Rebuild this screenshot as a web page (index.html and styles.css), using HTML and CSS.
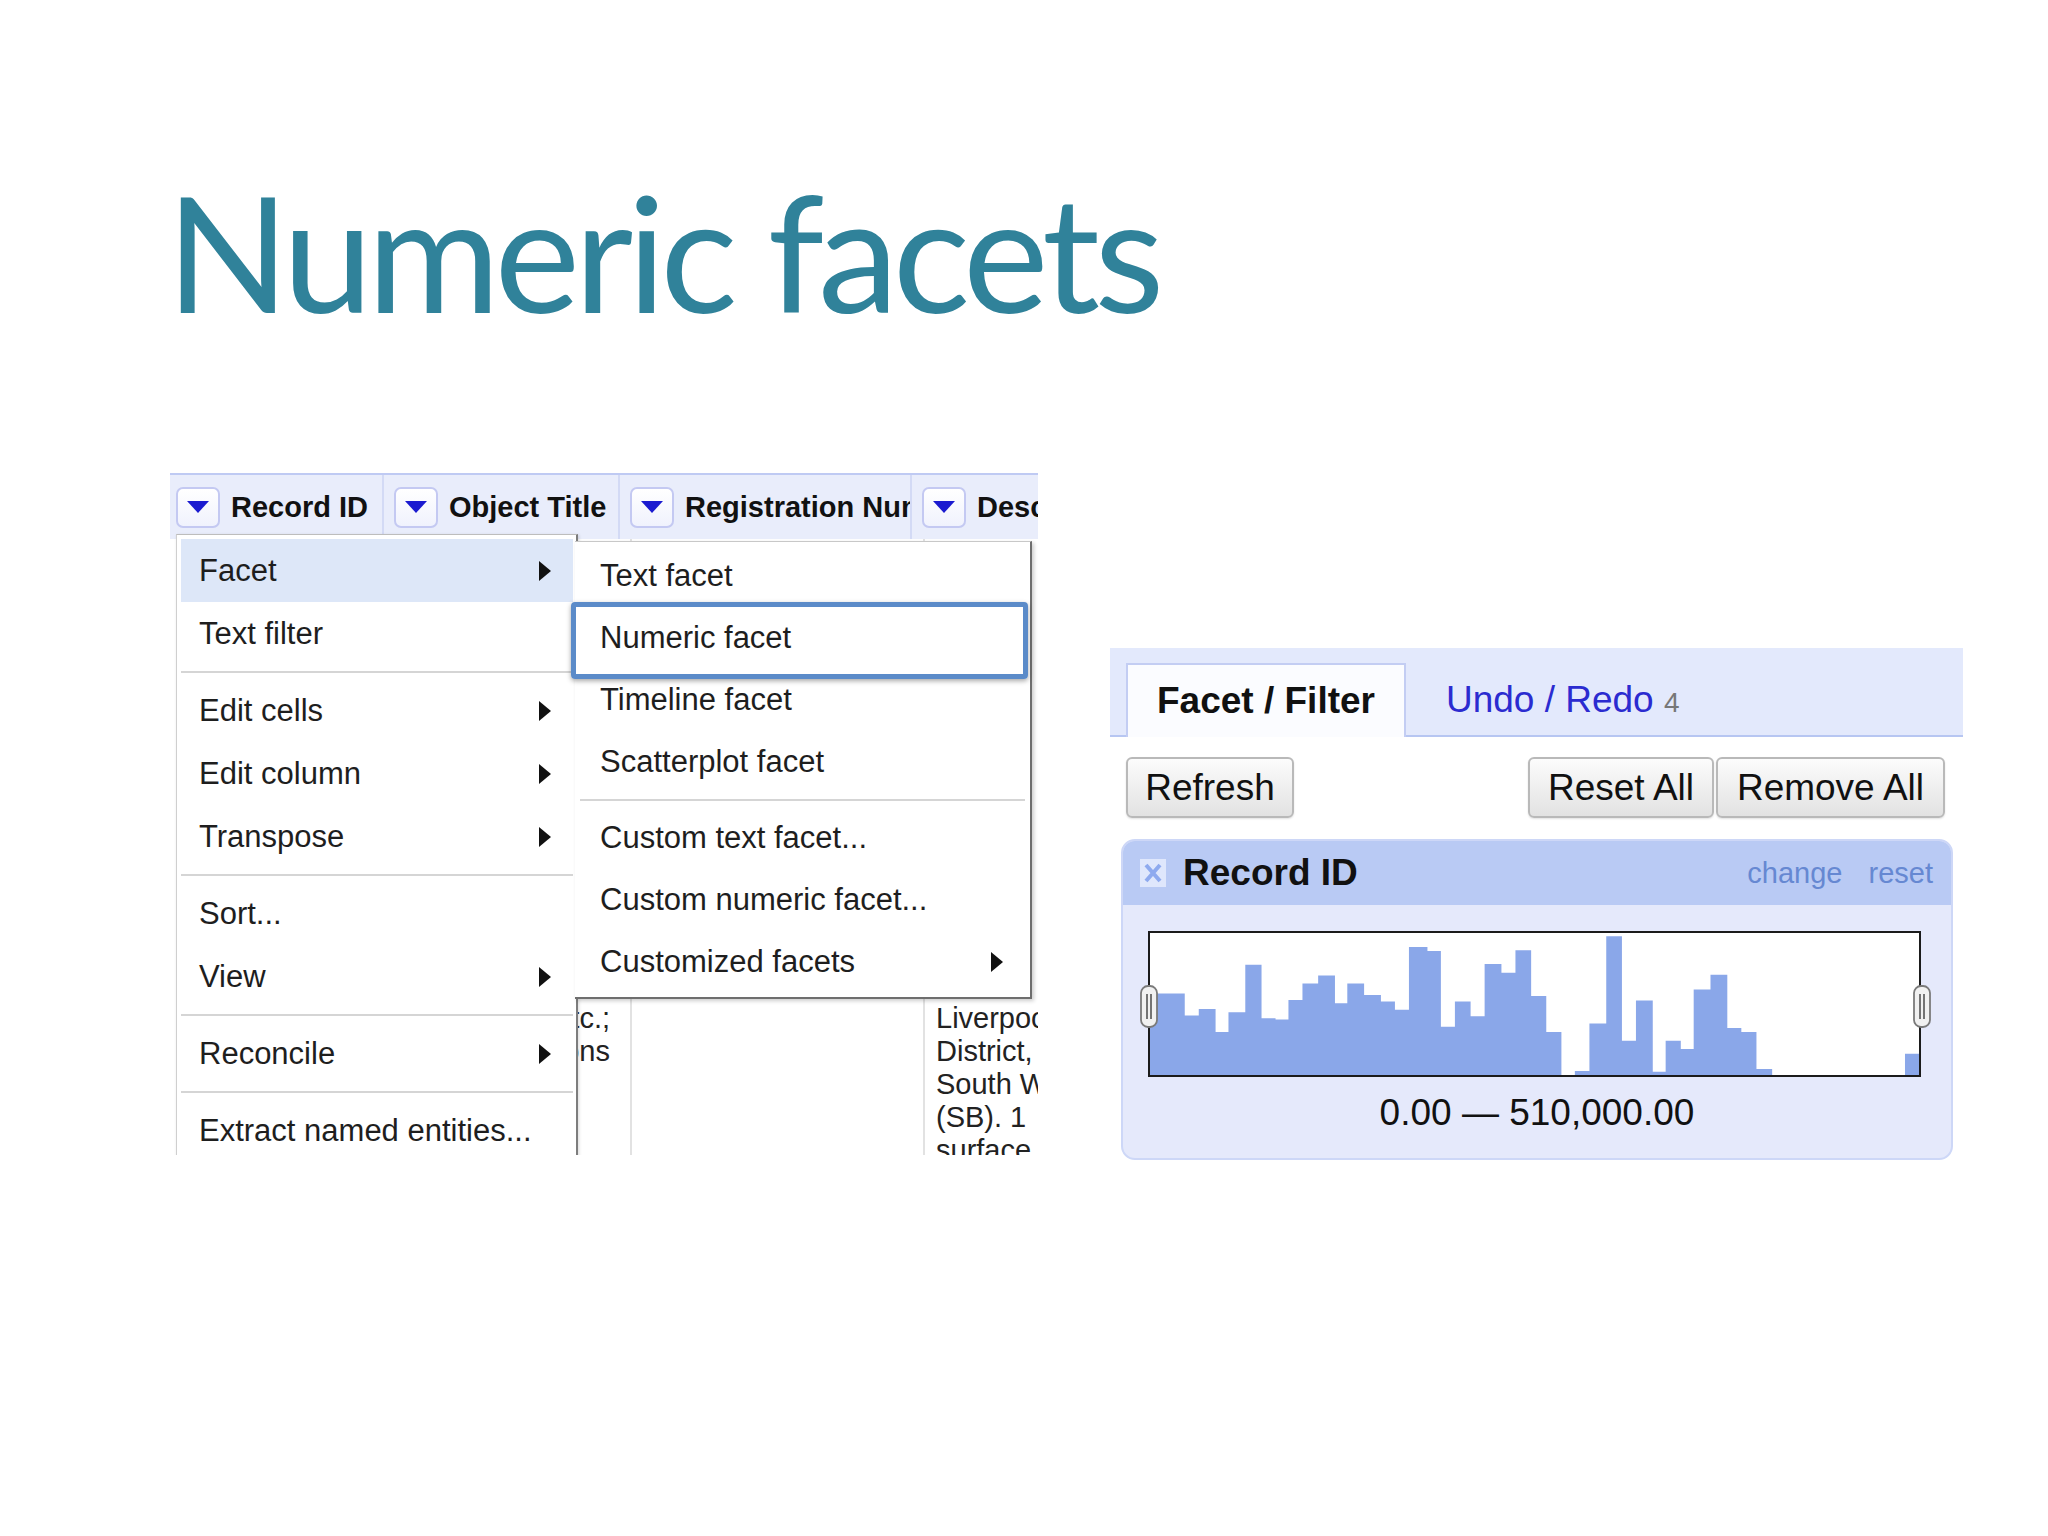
FILE: index.html
```html
<!DOCTYPE html>
<html>
<head>
<meta charset="utf-8">
<title>Numeric facets</title>
<link rel="stylesheet" href="styles.css">
</head>
<body>
<div class="slide">
  <h1 class="title">Numeric facets</h1>
  <div class="shots">
    <div class="grid-shot">
      <div class="col-head">
        <div class="hcell c1"><span class="dd"><svg viewBox="0 0 22 12"><path d="M0 0H22L11 12Z" fill="#1b1bd0"/></svg></span><span class="hname">Record ID</span></div>
        <div class="hcell c2"><span class="dd"><svg viewBox="0 0 22 12"><path d="M0 0H22L11 12Z" fill="#1b1bd0"/></svg></span><span class="hname">Object Title</span></div>
        <div class="hcell c3"><span class="dd"><svg viewBox="0 0 22 12"><path d="M0 0H22L11 12Z" fill="#1b1bd0"/></svg></span><span class="hname">Registration Number</span></div>
        <div class="hcell c4"><span class="dd"><svg viewBox="0 0 22 12"><path d="M0 0H22L11 12Z" fill="#1b1bd0"/></svg></span><span class="hname">Description</span></div>
      </div>
      <div class="grid-body">
        <div class="tcell ta">Brass, bronze, etc.;<br>brass buttons</div>
        <div class="tcell tb"></div>
        <div class="tcell tc">Liverpool<br>District, New<br>South Wales<br>(SB). 1<br>surface</div>

        <div class="menu">
          <div class="mi hl"><span>Facet</span><span class="arrow"></span></div>
          <div class="mi"><span>Text filter</span></div>
          <div class="sep"></div>
          <div class="mi"><span>Edit cells</span><span class="arrow"></span></div>
          <div class="mi"><span>Edit column</span><span class="arrow"></span></div>
          <div class="mi"><span>Transpose</span><span class="arrow"></span></div>
          <div class="sep"></div>
          <div class="mi"><span>Sort...</span></div>
          <div class="mi"><span>View</span><span class="arrow"></span></div>
          <div class="sep"></div>
          <div class="mi"><span>Reconcile</span><span class="arrow"></span></div>
          <div class="sep"></div>
          <div class="mi"><span>Extract named entities...</span></div>
        </div>

        <div class="submenu">
          <div class="mi"><span>Text facet</span></div>
          <div class="mi"><span>Numeric facet</span></div>
          <div class="mi"><span>Timeline facet</span></div>
          <div class="mi"><span>Scatterplot facet</span></div>
          <div class="sep"></div>
          <div class="mi"><span>Custom text facet...</span></div>
          <div class="mi"><span>Custom numeric facet...</span></div>
          <div class="mi"><span>Customized facets</span><span class="arrow"></span></div>
          <div class="pick"></div>
        </div>
      </div>
    </div>

    <div class="facet-panel">
      <div class="tabbar">
        <div class="tab">Facet / Filter</div>
        <div class="undo">Undo / Redo <span class="count">4</span></div>
      </div>
      <div class="btnrow">
        <div class="btn refresh">Refresh</div>
        <div class="btngroup">
          <div class="btn reset">Reset All</div>
          <div class="btn remove">Remove All</div>
        </div>
      </div>
      <div class="card">
        <div class="card-head">
          <svg class="x" viewBox="0 0 26 28"><rect width="26" height="28" fill="#dfe7fc"/><path d="M6 6L20 22M20 6L6 22" stroke="#8eaaef" stroke-width="4"/></svg>
          <span class="fname">Record ID</span>
          <span class="links"><span>change</span><span>reset</span></span>
        </div>
        <div class="hist">
          <svg class="bars" viewBox="88 875 1372 435" preserveAspectRatio="none"><path fill="#8aa7e9" d="M88 1310V1060H150V1128H175V1108H205V1178H228V1118H258V972H287V1136H312V1140H335V1080H360V1030H388V1005H418V1090H440V1030H470V1065H500V1085H525V1110H550V918H583V930H607V1162H632V1085H660V1130H685V970H715V997H740V928H768V1068H795V1178H822V1310H846V1298H872V1152H902V885H930V1205H955V1082H985V1300H1008V1205H1035V1230H1058V1048H1088V1003H1118V1166H1143V1178H1170V1292H1198V1310H1435V1245H1460V1310Z"/></svg>
          <svg class="handle l" viewBox="0 0 18 43"><rect x="1" y="1" width="16" height="41" rx="7" fill="#f1f1f1" stroke="#7a7a7a" stroke-width="1.8"/><path d="M7 9V34M11 9V34" stroke="#555" stroke-width="1.6"/></svg>
          <svg class="handle r" viewBox="0 0 18 43"><rect x="1" y="1" width="16" height="41" rx="7" fill="#f1f1f1" stroke="#7a7a7a" stroke-width="1.8"/><path d="M7 9V34M11 9V34" stroke="#555" stroke-width="1.6"/></svg>
        </div>
        <div class="range">0.00 — 510,000.00</div>
      </div>
    </div>
  </div>
</div>
</body>
</html>
```

FILE: styles.css
```css
* { box-sizing: border-box; }
html, body { margin: 0; padding: 0; background: #fff; }
body {
  width: 2048px;
  height: 1536px;
  overflow: hidden;
  font-family: "Liberation Sans", Arial, sans-serif;
}
.slide { padding: 170px 0 0 170px; }
.title {
  margin: 0 0 0 -4px;
  font-family: Lato, "Open Sans", sans-serif;
  font-weight: 400;
  font-size: 162px;
  line-height: 162px;
  color: #30829a;
  letter-spacing: -5.8px;
  white-space: nowrap;
}
.shots { display: flex; align-items: flex-start; margin-top: 141px; }

/* ---------- left: grid with menus ---------- */
.grid-shot {
  width: 868px;
  height: 682px;
  overflow: hidden;
  position: relative;
  background: #fff;
  flex: none;
}
.col-head {
  display: flex;
  height: 66px;
  background: #e9edfb;
  border-top: 2px solid #bfcaf3;
}
.hcell {
  display: flex;
  align-items: center;
  overflow: hidden;
  white-space: nowrap;
  border-right: 2px solid #d3daf5;
  padding-left: 10px;
  flex: none;
}
.hcell.c1 { width: 214px; padding-left: 6px; }
.hcell.c2 { width: 236px; }
.hcell.c3 { width: 292px; }
.hcell.c4 { flex: 1; border-right: none; }
.dd {
  flex: none;
  width: 44px;
  height: 41px;
  border: 2px solid #c4c9f2;
  border-radius: 7px;
  background: linear-gradient(#ffffff, #f0f2fd);
  display: flex;
  align-items: center;
  justify-content: center;
  margin-right: 11px;
}
.dd svg { width: 22px; height: 12px; display: block; }
.hname { font-weight: 700; font-size: 29px; color: #111; }

.grid-body { position: relative; height: 616px; display: flex; }
.tcell {
  flex: none;
  height: 100%;
  border-right: 2px solid #e2e2e2;
  padding-top: 463px;
  font-size: 29px;
  line-height: 33px;
  color: #222;
  white-space: nowrap;
  overflow: hidden;
}
.tcell.ta { width: 462px; text-align: right; padding-right: 20px; }
.tcell.tb { width: 293px; }
.tcell.tc { flex: 1; border-right: none; padding-left: 11px; }

.menu {
  position: absolute;
  left: 6px;
  top: -5px;
  width: 402px;
  height: 640px;
  background: #fff;
  border-left: 1px solid #cfcfcf;
  border-top: 1px solid #bdbdbd;
  border-right: 2px solid #7d7d7d;
  padding: 4px 3px 0 4px;
  box-shadow: 1px 1px 3px rgba(0, 0, 0, .15);
}
.mi {
  height: 63px;
  display: flex;
  align-items: center;
  justify-content: space-between;
  padding: 0 22px 0 18px;
  font-size: 31px;
  color: #1e1e1e;
  white-space: nowrap;
}
.mi.hl { background: #dde7f8; }
.sep { height: 2px; background: #d5d5d5; margin: 6px 0; }
.arrow {
  width: 0;
  height: 0;
  border-top: 10px solid transparent;
  border-bottom: 10px solid transparent;
  border-left: 12px solid #111;
}
.submenu {
  position: absolute;
  left: 405px;
  top: 2px;
  width: 457px;
  background: #fff;
  border-top: 1px solid #c8c8c8;
  border-right: 2px solid #6e6e6e;
  border-bottom: 2px solid #6e6e6e;
  padding: 3px 0 4px 0;
  box-shadow: 2px 2px 4px rgba(0, 0, 0, .2);
}
.submenu .mi { height: 62px; padding: 0 27px 0 25px; }
.submenu .sep { margin: 6px 5px; }
.pick {
  position: absolute;
  left: -4px;
  top: 60px;
  width: 457px;
  height: 77px;
  border: 5px solid #5b8bc9;
  border-radius: 4px;
  box-shadow: 0 2px 5px rgba(0, 0, 0, .35);
}

/* ---------- right: facet panel ---------- */
.facet-panel { width: 853px; margin-left: 72px; margin-top: 175px; flex: none; }
.tabbar {
  height: 89px;
  background: #e3e9fc;
  border-bottom: 2px solid #b7c6f2;
  display: flex;
  align-items: flex-end;
  padding-left: 16px;
}
.tab {
  height: 74px;
  margin-bottom: -2px;
  padding: 0 29px;
  background: #fbfcff;
  border: 2px solid #c3cdf3;
  border-bottom: none;
  display: flex;
  align-items: center;
  font-weight: 700;
  font-size: 37px;
  color: #111;
}
.undo {
  height: 74px;
  margin-bottom: -2px;
  margin-left: 40px;
  line-height: 74px;
  font-size: 37px;
  color: #2b2bd0;
  white-space: nowrap;
}
.undo .count { font-size: 28px; color: #777; }
.btnrow {
  display: flex;
  justify-content: space-between;
  margin-top: 20px;
  padding: 0 18px 0 16px;
}
.btngroup { display: flex; }
.btn {
  height: 61px;
  display: flex;
  align-items: center;
  justify-content: center;
  font-size: 37px;
  color: #111;
  border: 2px solid #b9b9b9;
  border-radius: 6px;
  background: linear-gradient(#fcfcfc, #e2e2e2);
  box-shadow: 0 1px 2px rgba(0, 0, 0, .12);
}
.btn.refresh { width: 168px; }
.btn.reset { width: 186px; }
.btn.remove { width: 229px; margin-left: 2px; }

.card {
  margin: 21px 10px 0 11px;
  height: 321px;
  background: #e5e9fb;
  border: 2px solid #cdd7f7;
  border-radius: 14px;
  overflow: hidden;
}
.card-head {
  height: 64px;
  background: #b9caf4;
  display: flex;
  align-items: center;
  padding: 0 18px 0 17px;
}
.x { width: 26px; height: 28px; margin-right: 17px; flex: none; display: block; }
.fname { font-weight: 700; font-size: 37px; color: #111; flex: 1; }
.links { font-size: 29px; color: #6688d2; white-space: nowrap; }
.links span + span { margin-left: 26px; }
.hist {
  position: relative;
  margin: 26px 0 0 25px;
  width: 773px;
  height: 146px;
  border: 2px solid #1b1b1b;
  background: #fff;
}
.bars { display: block; width: 100%; height: 100%; }
.handle { position: absolute; top: 52px; width: 18px; height: 43px; }
.handle.l { left: -10px; }
.handle.r { right: -12px; }
.range {
  text-align: center;
  font-size: 37px;
  line-height: 42px;
  margin-top: 15px;
  color: #111;
}
```
